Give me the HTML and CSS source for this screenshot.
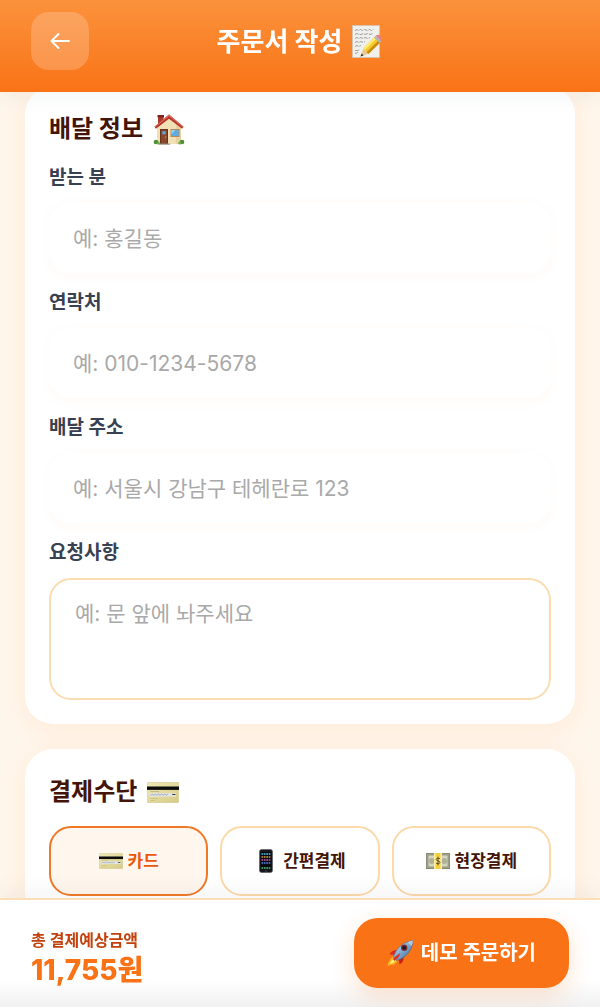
FILE: index.html
```html
<!DOCTYPE html>
<html lang="ko">
  <head>
    <title>주문서 작성</title>
    <meta charset="utf-8">
    <meta name="viewport" content="width=device-width, initial-scale=1">
    <link rel="stylesheet" href="styles.css">
  </head>
  <body>

  <!-- shared emoji drawings -->
  <svg class="defs" aria-hidden="true">
    <defs>
      <linearGradient id="cardFill" x1="0" y1="0" x2="1" y2="1">
        <stop offset="0" stop-color="#f0e8b4"/>
        <stop offset="1" stop-color="#d6cb86"/>
      </linearGradient>
      <linearGradient id="rocketFill" x1="0" y1="0" x2="1" y2="1">
        <stop offset="0" stop-color="#dbe9f3"/>
        <stop offset=".5" stop-color="#7aa9cf"/>
        <stop offset="1" stop-color="#2d5683"/>
      </linearGradient>
      <symbol id="creditCard" viewBox="0 0 32 21">
        <rect x=".3" y=".3" width="31.4" height="20.4" rx="1.2" fill="url(#cardFill)" stroke="#c9c08e" stroke-width=".5"/>
        <rect y="4.5" width="32" height="3.4" fill="#0c0c0c"/>
        <path d="M3 9.5h9" stroke="#aaa274" stroke-width=".6"/>
        <rect x="2.5" y="11" width="26.500" height="3.600" fill="#e4e6de"/>
        <path d="M3.500 13.200l2-1.200 1 1.200 2-1 1.200 1 2-1.400 1 1.400 2-1.200 1.500 1.200 2-1.200 1 1.200 2-1.200" fill="none" stroke="#8295c4" stroke-width=".7"/>
        <path d="M25.200 12.500h3.300" stroke="#333" stroke-width="1"/>
        <path d="M3 16.500h8M3 18.500h5" stroke="#c2b87c" stroke-width=".6"/>
      </symbol>
    </defs>
  </svg>

  <header class="header">
    <button type="button" class="back" aria-label="뒤로">
      <svg width="20" height="18" viewBox="0 0 20 18" fill="none" stroke="#fff" stroke-width="2" stroke-linecap="round" stroke-linejoin="round">
        <path d="M19 9H1.500M8.500 2L1.500 9l7 7"/>
      </svg>
    </button>
    <h1 class="header-title">
      주문서 작성
      <svg width="31" height="34" viewBox="0 0 31 34" aria-hidden="true">
        <rect x=".5" y=".5" width="27" height="32" fill="#f0f0ec" stroke="#cfc5b8" stroke-width=".8"/>
        <path d="M3 5.500l2-1 1.500 1 2-1 2 1 2-1 3 1 2-1 2 1 2-1M3 9.500l2-1 2 1h2l2-1 2 1 3-1 2 1 3-1M3 13.500l2-1 2 1 2-1 2 1 2-1 3 1 2-1M3 17.500l2-1 2 1 2-1 2 1 2-1M3 21.500l2-1 2 1 2-1M3 25.500h3l2-1M3 28.500l3-1" fill="none" stroke="#7d7d80" stroke-width=".7" stroke-dasharray="4 1"/>
        <path d="M8.500 31.500l3-8 5.500 5z" fill="#e8c79a"/>
        <path d="M8.500 31.500l1.100-3 2 1.900z" fill="#333"/>
        <path d="M11 23.500L22.500 12l5.700 5.500L16.500 29z" fill="#f6c927"/>
        <path d="M11 23.500L22.500 12l1.900 1.800L12.900 25.300z" fill="#ffe873"/>
        <path d="M14.700 27.100L26.300 15.700l1.900 1.800L16.500 29z" fill="#c98c12"/>
        <path d="M22 12.500l1.800-1.800 5.700 5.500-1.800 1.800z" fill="#aeb4b8"/>
        <path d="M23.800 10.700c1.500-1.200 3.300-1.100 4.800.300 1.700 1.700 2 3.600.900 5.200z" fill="#e78080"/>
      </svg>
    </h1>
  </header>

  <main class="main">
    <section class="card">
      <h2 class="card-title">
        배달 정보
        <svg width="32" height="32" viewBox="0 0 32 32" aria-hidden="true">
          <path d="M5 3.500h5.500v10H5z" fill="#a83a2e"/>
          <path d="M4.500 2h6.500v2.500H4.500z" fill="#7e241d"/>
          <path d="M4 14.500L16 4.500l12 10V31H4z" fill="#f1dfb6"/>
          <path d="M23 11l5 3.500V31h-5z" fill="#e8d1a1"/>
          <path d="M16 1.500L1.500 13.800l1.400 2L16 5.800l13.100 10 1.400-2z" fill="#b6342d"/>
          <path d="M16 1.500L1.500 13.800l.5.700L16 3.300l14 11.200.5-.7z" fill="#dc6b59"/>
          <path d="M7 16h8v15H7z" fill="#6b321c"/>
          <path d="M8.200 17.200h5.600V30H8.200z" fill="#8b4a2d"/>
          <path d="M9.300 18.300h3.400v3H9.300z" fill="#5baade"/>
          <circle cx="12.800" cy="24" r=".6" fill="#f5d05e"/>
          <path d="M17.500 16h9v8h-9z" fill="#c08450"/>
          <path d="M18.400 16.900h7.200v6.200h-7.200z" fill="#5aaee3"/>
          <path d="M18.400 16.900h4l-4 4.500z" fill="#95d3f2"/>
          <path d="M6 30.500h11v1.300H6z" fill="#a59b8a"/>
          <circle cx="3" cy="29" r="2.300" fill="#4d8e36"/>
          <circle cx="5.200" cy="30" r="1.600" fill="#6cab47"/>
          <circle cx="29" cy="29" r="2.300" fill="#4d8e36"/>
          <circle cx="26.800" cy="30" r="1.600" fill="#6cab47"/>
        </svg>
      </h2>
      <form class="form">
        <div class="field">
          <label for="name">받는 분</label>
          <input id="name" type="text" placeholder="예: 홍길동">
        </div>
        <div class="field">
          <label for="phone">연락처</label>
          <input id="phone" type="tel" placeholder="예: 010-1234-5678">
        </div>
        <div class="field">
          <label for="address">배달 주소</label>
          <input id="address" type="text" placeholder="예: 서울시 강남구 테헤란로 123">
        </div>
        <div class="field">
          <label for="memo">요청사항</label>
          <textarea id="memo" placeholder="예: 문 앞에 놔주세요"></textarea>
        </div>
      </form>
    </section>

    <section class="card">
      <h2 class="card-title">
        결제수단
        <svg width="32" height="21" aria-hidden="true"><use href="#creditCard"/></svg>
      </h2>
      <div class="methods">
        <button type="button" class="method active" aria-pressed="true">
          <svg width="24" height="16" aria-hidden="true"><use href="#creditCard"/></svg>
          카드
        </button>
        <button type="button" class="method" aria-pressed="false">
          <svg width="24" height="24" viewBox="0 0 24 24" aria-hidden="true">
            <rect x="5.500" y=".5" width="13" height="23" rx="2" fill="#17181c" stroke="#55575c" stroke-width=".6"/>
            <rect x="6.800" y="3" width="10.400" height="17.500" fill="#07090f"/>
            <path d="M7.500 5h9" stroke="#4fc3e8" stroke-width="1.700" stroke-dasharray="1.700 .7"/>
            <path d="M7.500 8h9" stroke="#d8a048" stroke-width="1.700" stroke-dasharray="1.700 .7"/>
            <path d="M7.500 11h9" stroke="#c45cae" stroke-width="1.700" stroke-dasharray="1.700 .7"/>
            <path d="M7.500 14h9" stroke="#5580dd" stroke-width="1.700" stroke-dasharray="1.700 .7"/>
            <path d="M7.500 19h9" stroke="#52c47a" stroke-width="1.700" stroke-dasharray="1.700 .7"/>
            <circle cx="12" cy="22" r=".8" fill="#4a4c50"/>
          </svg>
          간편결제
        </button>
        <button type="button" class="method" aria-pressed="false">
          <svg width="24" height="16" viewBox="0 0 24 16" aria-hidden="true">
            <rect x=".4" y=".4" width="23.200" height="15.200" fill="#a9aa91" stroke="#7c7e69" stroke-width=".8"/>
            <rect x="2" y="2" width="20" height="12" fill="#d5d6bf" stroke="#83856e" stroke-width=".7"/>
            <circle cx="5.800" cy="8" r="3" fill="#aeb197"/>
            <circle cx="18.200" cy="8" r="3" fill="#aeb197"/>
            <path d="M8 0h8v16H8z" fill="#f1cf3f"/>
            <path d="M8 0h1.500v16H8zM14.500 0H16v16h-1.500z" fill="#fff0a0"/>
            <circle cx="12" cy="8" r="3.800" fill="#f7e58a"/>
            <path d="M14 5.800c-.6-.8-3.800-1-3.800.7 0 1.800 3.800 1 3.800 2.900 0 1.700-3.300 1.600-4 .6M12 3.800v8.400" fill="none" stroke="#5a4a1c" stroke-width="1"/>
          </svg>
          현장결제
        </button>
      </div>
    </section>
  </main>

  <footer class="bar">
    <div class="total">
      <span class="total-label">총 결제예상금액</span>
      <strong class="total-price">11,755원</strong>
    </div>
    <button type="button" class="order">
      <svg width="27" height="27" viewBox="0 0 27 27" aria-hidden="true">
        <path d="M8 16c-4 1-7 5-7.500 10 2-.5 3.800-1 5-2l.5 1.500c2.800-1.800 4.500-4 5-6.500z" fill="#f6b21c"/>
        <path d="M7.500 18.500c-2.500 1-4 3-4.500 5.500 3-.6 4.800-2 5.800-4z" fill="#fff07a"/>
        <path d="M10 10.500c-3-.6-6 .8-7.500 4l5.500.5z" fill="#d92d20"/>
        <path d="M16.500 17c.6 3-.8 6-4 7.500l-.5-5.500z" fill="#c91f18"/>
        <path d="M6.500 17.500c1.500-8 9-15.800 19.500-17C25.500 11 18 18.500 9.500 20.500z" fill="url(#rocketFill)" stroke="#385d84" stroke-width=".5"/>
        <path d="M20.500 2.200c1.800-.9 3.600-1.400 5.500-1.700-.2 2-.8 3.900-1.600 5.600z" fill="#b9c8d5"/>
        <circle cx="17.200" cy="7.800" r="3.200" fill="#8e2d2d"/>
        <circle cx="17.200" cy="7.800" r="2" fill="#171d33"/>
        <path d="M6 19c2-2.500 4.500-4.500 7.500-6-1 3.300-3 5.800-6 8z" fill="#df3024"/>
      </svg>
      데모 주문하기
    </button>
  </footer>

  </body>
</html>
```
FILE: styles.css
```css
* {
  box-sizing: border-box;
}
body {
  margin: 0;
  background: #fff6eb;
  color: #431407;
  font-family: Inter, "Noto Sans CJK KR", sans-serif;
  font-size: 20px;
  line-height: 30px;
}
button, input, textarea {
  font: inherit;
}
button {
  padding: 0;
  cursor: pointer;
}
svg {
  flex: none;
}

.defs {
  position: absolute;
  width: 0;
  height: 0;
}

/* header */
.header {
  position: fixed;
  top: 0;
  left: 0;
  right: 0;
  z-index: 2;
  display: grid;
  grid-template-columns: 58px 1fr 58px;
  align-items: center;
  padding: 12px 31px 22px;
  background: linear-gradient(#fb923c, #f97316);
  box-shadow: 0 4px 20px rgba(30, 60, 60, 0.06);
}
.back {
  display: flex;
  align-items: center;
  justify-content: center;
  height: 58px;
  border: 0;
  border-radius: 18px;
  background: rgba(255, 255, 255, 0.2);
}
.header-title {
  display: flex;
  align-items: center;
  justify-content: center;
  gap: 10px;
  margin: 0;
  padding-top: 2px;
  color: #fff;
  font-size: 26px;
  font-weight: 700;
  line-height: 38px;
}

/* cards */
.main {
  display: flex;
  flex-direction: column;
  gap: 25px;
  padding: 86px 25px;
}
.card {
  padding: 24px;
  border-radius: 28px;
  background: #fff;
  box-shadow: 0 5px 28px rgba(249, 115, 22, 0.08);
}
.card-title {
  display: flex;
  align-items: center;
  gap: 10px;
  margin: 0 0 15px;
  font-size: 24px;
  font-weight: 700;
  line-height: 38px;
}

/* form */
.form {
  display: flex;
  flex-direction: column;
  gap: 15px;
}
.field {
  display: flex;
  flex-direction: column;
  gap: 10px;
}
.field label {
  color: #374151;
  font-size: 19px;
  font-weight: 700;
}
.field input,
.field textarea {
  width: 100%;
  border: 0;
  border-radius: 22px;
  outline: none;
  background: #fff;
  color: #431407;
  font-size: 21px;
}
.field input {
  height: 70px;
  padding: 0 24px;
  box-shadow: 0 3px 14px rgba(249, 115, 22, 0.04);
}
.field textarea {
  display: block;
  height: 122px;
  padding: 19px 24px;
  border: 2px solid #fbdcb0;
  resize: none;
}
.field ::placeholder {
  color: #a9a9a9;
  opacity: 1;
}

/* payment methods */
.methods {
  display: grid;
  grid-template-columns: repeat(3, 1fr);
  gap: 12px;
}
.method {
  display: flex;
  align-items: center;
  justify-content: center;
  gap: 5px;
  height: 70px;
  border: 2px solid #fdd9a8;
  border-radius: 22px;
  background: #fff;
  color: #431407;
  font-size: 17px;
  font-weight: 700;
}
.method.active {
  border-color: #f07826;
  background: #fff7ed;
  color: #ea580c;
}

/* bottom bar */
.bar {
  position: fixed;
  left: 0;
  right: 0;
  bottom: 0;
  z-index: 2;
  display: flex;
  align-items: center;
  justify-content: space-between;
  padding: 18px 31px 19px;
  border-top: 2px solid #fbdfb9;
  background: linear-gradient(#fff 75%, #f1f1f1);
  box-shadow: 0 -4px 24px rgba(30, 40, 60, 0.06);
}
.total {
  display: flex;
  flex-direction: column;
  padding-top: 3px;
}
.total-label {
  color: #c2410c;
  font-size: 16px;
  font-weight: 600;
}
.total-price {
  color: #f97316;
  font-size: 28px;
  font-weight: 800;
  line-height: 30px;
}
.order {
  display: flex;
  align-items: center;
  justify-content: center;
  gap: 7px;
  height: 70px;
  padding: 0 33px;
  border: 0;
  border-radius: 24px;
  background: #f97316;
  box-shadow: 0 8px 24px rgba(249, 115, 22, 0.2);
  color: #fff;
  font-size: 20px;
  font-weight: 700;
}
```
